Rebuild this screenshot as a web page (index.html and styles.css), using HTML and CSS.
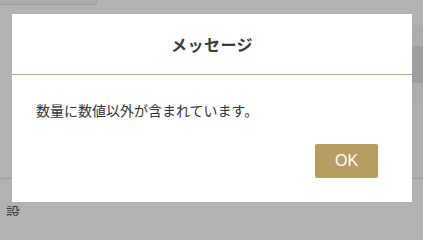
FILE: index.html
```html
<!DOCTYPE html>
<html lang="ja">
<head>
<meta charset="utf-8">
<title>メッセージ</title>
<link rel="stylesheet" href="styles.css">
</head>
<body>
<div class="page">
  <div class="topbox"></div>
  <div class="row r1"></div>
  <div class="row r2"><div class="cell"></div></div>
  <div class="row r3"><div class="cell"></div></div>
  <div class="row r4"><div class="cell"></div></div>
  <div class="row r5"><div class="cell"></div></div>
  <div class="label">設</div>
</div>
<div class="overlay">
  <div class="dialog" role="dialog">
    <div class="dialog-header">メッセージ</div>
    <div class="dialog-body">数量に数値以外が含まれています。</div>
    <div class="dialog-footer"><button class="btn-ok">OK</button></div>
  </div>
</div>
</body>
</html>
```
FILE: styles.css
```css
html, body {
  margin: 0;
  padding: 0;
  background: #ffffff;
  font-family: "Noto Sans CJK JP", "Noto Sans", sans-serif;
  overflow: hidden;
}
.page {
  width: 423px;
  height: 216px;
}
.topbox {
  width: 96px;
  height: 4px;
  background: #f6f6f6;
  border-right: 1px solid #e4e4e4;
  border-bottom: 1px solid #e4e4e4;
}
.row {
  display: flex;
  justify-content: flex-end;
}
.cell {
  width: 11px;
}
.r1 { height: 20px; }
.r2 { height: 21px; }
.r2 .cell { background: #f8f8f8; }
.r3 { height: 37px; }
.r3 .cell { background: #e2e2e2; }
.r4 { height: 20px; }
.r4 .cell { background: #f6f6f6; }
.r5 { height: 75px; border-bottom: 1px solid #e4e4e4; }
.r5 .cell { background: #fbfbfb; }
.label {
  margin-top: 24px;
  margin-left: 6px;
  font-size: 14px;
  line-height: 16px;
  color: #555;
}
.overlay {
  position: fixed;
  inset: 0;
  background: rgba(0, 0, 0, 0.3);
  display: flex;
  align-items: flex-start;
  justify-content: flex-start;
  padding: 14px 0 0 12px;
}
.dialog {
  width: 400px;
  background: #ffffff;
  display: flex;
  flex-direction: column;
}
.dialog-header {
  height: 60px;
  border-bottom: 1px solid #c9a463;
  display: flex;
  align-items: center;
  justify-content: center;
  font-size: 16px;
  font-weight: bold;
  color: #3a3a3a;
  letter-spacing: 0.5px;
}
.dialog-body {
  padding: 25px 24px 24px 24px;
  font-size: 14px;
  line-height: 20px;
  color: #333;
}
.dialog-footer {
  display: flex;
  justify-content: flex-end;
  padding: 0 34px 24px 24px;
}
.btn-ok {
  width: 63px;
  height: 34px;
  border: none;
  border-radius: 2px;
  background: #b99c63;
  color: #ffffff;
  font-family: "Liberation Sans", Arial, sans-serif;
  font-size: 16px;
  padding: 0;
}
```
